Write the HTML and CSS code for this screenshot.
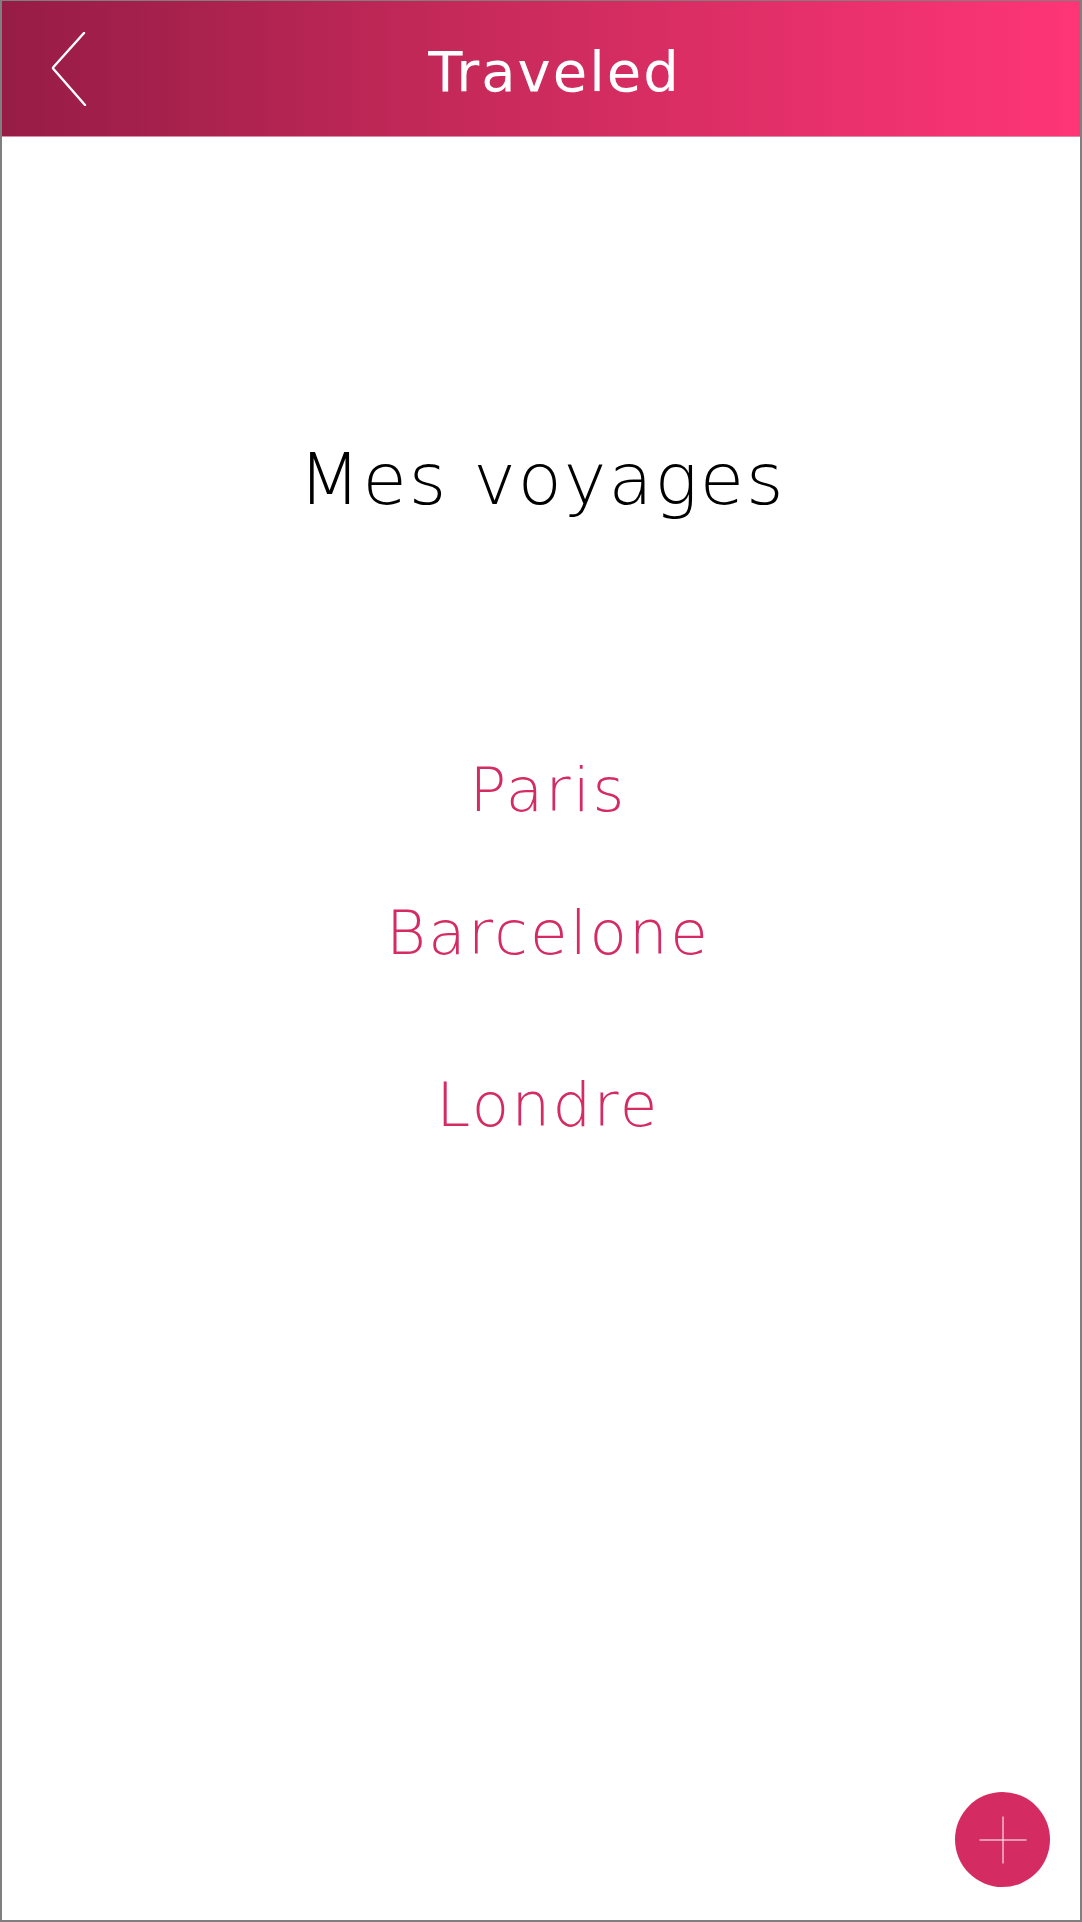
FILE: index.html
```html
<!DOCTYPE html>
<html lang="fr">
<head>
<meta charset="utf-8">
<title>Traveled</title>
<link rel="stylesheet" href="styles.css">
</head>
<body>
<div class="screen">
  <header class="appbar">
    <button class="back" aria-label="Retour">
      <svg width="36" height="74" viewBox="0 0 36 74"><path d="M33 1 L2.5 35 Q1.5 36 2.5 37 L34 73" fill="none" stroke="#fff" stroke-width="2.4" stroke-linecap="round" stroke-linejoin="round"/></svg>
    </button>
    <h1 class="appbar-title">Traveled</h1>
  </header>
  <main class="content">
    <h2 class="heading">Mes voyages</h2>
    <ul class="trips">
      <li class="trip">Paris</li>
      <li class="trip">Barcelone</li>
      <li class="trip trip-far">Londre</li>
    </ul>
  </main>
  <button class="fab" aria-label="Ajouter">
    <svg width="48" height="48" viewBox="0 0 48 48"><path d="M0.5 24 H47.5 M24 0.5 V47.5" stroke="#fff" stroke-width="1"/></svg>
  </button>
</div>
</body>
</html>
```
FILE: styles.css
```css
* { box-sizing: border-box; }
html, body { margin: 0; padding: 0; background: #fff; }
.screen {
  position: relative;
  width: 1082px;
  height: 1922px;
  border: 2px solid #7f7f7f;
  border-top-width: 1px;
  background: #fff;
  font-family: "DejaVu Sans", "Liberation Sans", sans-serif;
  overflow: hidden;
}
.appbar {
  display: flex;
  align-items: center;
  height: 136px;
  background: linear-gradient(90deg, #961c46 0%, #c82a5b 45%, #ff3578 100%);
  border-bottom: 1px solid #de8aaa;
}
.back {
  display: flex;
  margin: 0 0 0 49px;
  padding: 0;
  border: 0;
  background: none;
  width: 36px;
  height: 74px;
}
.appbar-title {
  flex: 1;
  margin: 0 58px 0 0;
  padding-top: 6px;
  text-align: center;
  color: #fff;
  font-size: 56px;
  font-weight: 400;
  letter-spacing: 2px;
  line-height: 1;
}
.content {
  display: flex;
  flex-direction: column;
  align-items: center;
}
.heading {
  margin: 306px 0 0;
  padding-left: 2px;
  font-size: 72px;
  font-weight: 200;
  letter-spacing: 2px;
  line-height: 1;
  color: #000;
}
.trips {
  list-style: none;
  margin: 244px 0 0;
  padding: 0 0 0 14px;
  display: flex;
  flex-direction: column;
  align-items: center;
  gap: 82px;
}
.trip {
  font-size: 61px;
  font-weight: 200;
  letter-spacing: 2.4px;
  line-height: 1;
  color: #d42c62;
}
.trip-far { margin-top: 29px; }
.fab {
  position: absolute;
  right: 30px;
  bottom: 33px;
  width: 95px;
  height: 95px;
  border-radius: 50%;
  border: 0;
  padding: 0;
  background: #d42c62;
  display: flex;
  align-items: center;
  justify-content: center;
}
```
